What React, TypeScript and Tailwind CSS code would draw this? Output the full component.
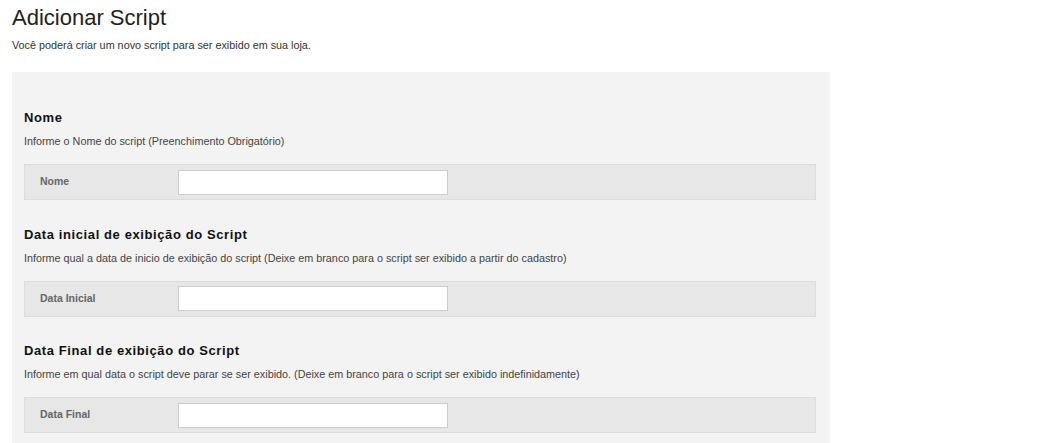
const sections = [
  {
    title: 'Nome',
    hint: 'Informe o Nome do script (Preenchimento Obrigatório)',
    label: 'Nome',
  },
  {
    title: 'Data inicial de exibição do Script',
    hint: 'Informe qual a data de inicio de exibição do script (Deixe em branco para o script ser exibido a partir do cadastro)',
    label: 'Data Inicial',
  },
  {
    title: 'Data Final de exibição do Script',
    hint: 'Informe em qual data o script deve parar se ser exibido. (Deixe em branco para o script ser exibido indefinidamente)',
    label: 'Data Final',
  },
];

export default function App() {
  return (
    <main className="min-h-screen bg-white px-3 pt-[5px] font-['Liberation_Sans',Arial,sans-serif]">
      <h1 className="text-[22px] leading-[26px] text-[#222]">Adicionar Script</h1>
      <p className="mt-[7px] text-[10.8px] leading-[14px] text-[#333]">
        Você poderá criar um novo script para ser exibido em sua loja.
      </p>

      <div className="mt-[20px] w-[818px] bg-[#f3f3f3] pl-3 pr-[14px] pt-[38px] pb-[10px]">
        {sections.map((s) => (
          <section key={s.title} className="mb-[26.5px] last:mb-0">
            <h3 className="text-[13px] font-bold leading-4 tracking-[0.6px] text-[#111]">{s.title}</h3>
            <p className="mt-2 text-[10.8px] leading-[14px] text-[#444]">{s.hint}</p>
            <div className="mt-[16px] flex h-9 items-center border border-[#dcdcdc] bg-[#e7e7e7] pl-[15px]">
              <label className="w-[138px] text-[10.5px] font-bold text-[#666]">{s.label}</label>
              <input type="text" className="h-[25px] w-[270px] border border-[#cccccc] bg-white px-2 text-[12px] outline-none" />
            </div>
          </section>
        ))}
      </div>
    </main>
  );
}
